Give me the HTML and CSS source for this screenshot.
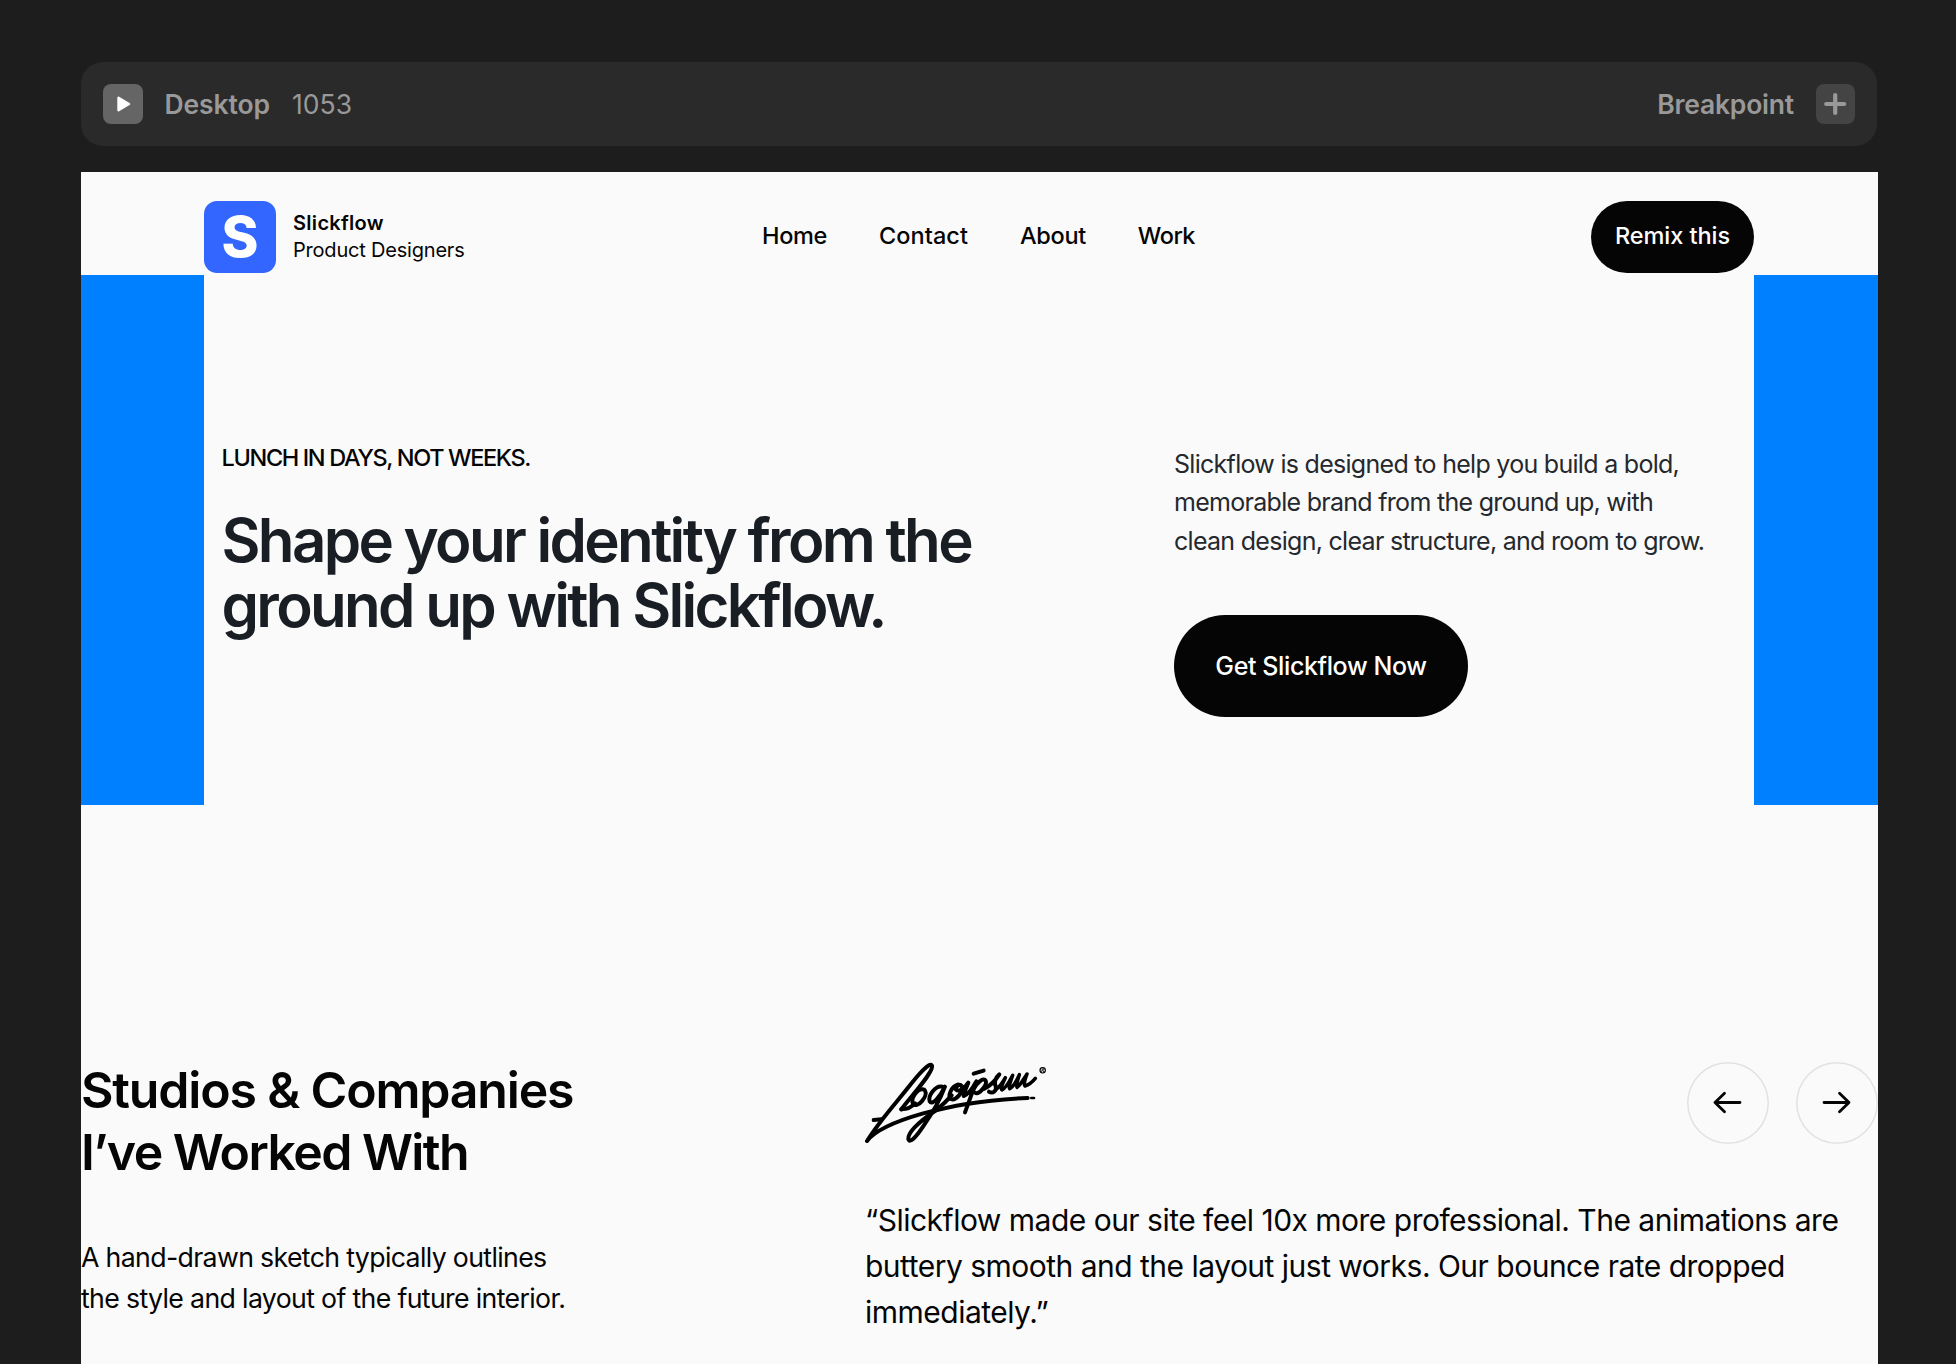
FILE: index.html
```html
<!DOCTYPE html>
<html lang="en">
<head>
<meta charset="utf-8">
<title>Slickflow</title>
<link rel="stylesheet" href="styles.css">
</head>
<body>
<div class="toolbar">
  <div class="toolbar-group">
    <span class="tool tool-play"><svg width="40" height="40" viewBox="0 0 40 40"><path d="M15.5 13.8v12.4L26 20z" fill="#fff" stroke="#fff" stroke-width="2.4" stroke-linejoin="round"/></svg></span>
    <span class="device">Desktop</span>
    <span class="device-width">1053</span>
  </div>
  <div class="toolbar-group">
    <span class="breakpoint">Breakpoint</span>
    <span class="tool tool-add"><svg width="39" height="40" viewBox="0 0 39 40"><path d="M19.2 11v18M10.2 20h18" fill="none" stroke="#999" stroke-width="4.2" stroke-linecap="round"/></svg></span>
  </div>
</div>
<div class="page">
  <header class="header">
    <div class="brand">
      <span class="brand-mark">S</span>
      <div class="brand-text"><span class="brand-name">Slickflow</span><span class="brand-role">Product Designers</span></div>
    </div>
    <nav class="nav">
      <a class="nav-home">Home</a><a class="nav-contact">Contact</a><a class="nav-about">About</a><a class="nav-work">Work</a>
    </nav>
    <a class="remix">Remix this</a>
  </header>
  <section class="hero">
    <div class="hero-inner">
      <div class="hero-copy">
        <p class="eyebrow">LUNCH IN DAYS, NOT WEEKS.</p>
        <h1 class="hero-title">Shape your identity from the<br>ground up with Slickflow.</h1>
      </div>
      <div class="hero-side">
        <p class="hero-text">Slickflow is designed to help you build a bold,<br>memorable brand from the ground up, with<br>clean design, clear structure, and room to grow.</p>
        <a class="cta">Get Slickflow Now</a>
      </div>
    </div>
  </section>
  <section class="clients">
    <div class="clients-intro">
      <h2 class="clients-title">Studios &amp; Companies<br><span class="title-second">I’ve Worked With</span></h2>
      <p class="clients-text">A hand-drawn sketch typically outlines<br>the style and layout of the future interior.</p>
    </div>
    <div class="testimonial">
      <div class="testimonial-top">
        <svg class="signature" width="182" height="82" viewBox="78 66 546 246" fill="none" stroke="#000" stroke-width="12" stroke-linecap="round" stroke-linejoin="round">
          <path d="M104 240L128 238"/>
          <path d="M187 208C222 162 284 96 279 77C274 62 236 106 208 142C172 188 122 242 84 303C112 266 180 241 250 221C330 200 420 180 566 174"/>
          <path d="M187 208C204 208 218 202 228 190"/>
          <path d="M252 148C234 146 214 176 222 192C236 206 268 168 258 152C256 148 254 148 252 148"/>
          <path d="M310 140C290 134 266 168 272 184C280 198 304 168 318 140C306 172 280 220 252 260C232 290 212 312 208 297C206 274 248 240 292 210C314 192 326 180 338 166"/>
          <path d="M356 134C336 140 326 168 335 177C350 184 376 154 368 138C362 130 350 138 350 148C360 158 376 146 388 128C382 144 374 158 374 168C386 164 400 146 412 124L378 217"/>
          <path d="M404 101L434 92"/>
          <path d="M402 150C414 126 434 112 440 122C446 134 420 166 408 158"/>
          <path d="M436 146C452 138 470 120 481 103C470 112 464 128 470 138C474 152 462 162 450 155"/>
          <path d="M474 146C484 138 492 126 499 113C490 132 484 146 489 150C502 144 512 122 521 106C514 126 508 142 512 146C524 140 534 120 541 104C536 120 532 138 534 142C546 134 554 116 564 102C558 116 554 134 558 138C570 134 580 126 589 115" stroke-width="10.5"/>
          <path d="M577 174h8" stroke-width="8"/>
          <circle cx="611" cy="91" r="8" stroke-width="3.5"/>
          <path d="M608 95l2-8c6-2 6 3 1 4l3 4" stroke-width="2.5"/>
        </svg>
        <div class="arrows">
          <span class="arrow"><svg width="82" height="82" viewBox="0 0 82 82"><path d="M53 40.5H28M37.5 31.2L28 40.5L37.5 49.8"/></svg></span>
          <span class="arrow"><svg width="82" height="82" viewBox="0 0 82 82"><path d="M28 40.5H53M43.5 31.2L53 40.5L43.5 49.8"/></svg></span>
        </div>
      </div>
      <p class="quote">“Slickflow made our site feel 10x more professional. The animations are<br>buttery smooth and the layout just works. Our bounce rate dropped<br>immediately.”</p>
    </div>
  </section>
</div>
</body>
</html>
```
FILE: styles.css
```css
* { box-sizing: border-box; }
html, body { height: 100%; overflow: hidden; }
body {
  margin: 0;
  padding: 62px 78px 0 81px;
  background: #1d1d1d;
  color: #050505;
  font-family: Inter, "Liberation Sans", sans-serif;
}
p, h1, h2 { margin: 0; white-space: nowrap; }

.toolbar {
  display: flex;
  align-items: center;
  justify-content: space-between;
  height: 84px;
  margin-right: 1px;
  padding: 0 22px;
  border-radius: 22px;
  background: #2a2a2a;
  color: #999;
  font-size: 26.5px;
  letter-spacing: 0.3px;
}
.toolbar-group { display: flex; align-items: center; }
.device, .device-width, .breakpoint { padding-bottom: 1px; }
.tool { display: flex; height: 40px; border-radius: 8px; }
.tool-play { width: 40px; background: #656565; }
.tool-add { width: 39px; margin-left: 22px; background: #444; }
.device { margin-left: 21.5px; font-weight: 600; letter-spacing: -0.1px; }
.device-width { margin-left: 22px; letter-spacing: 0; }
.breakpoint { font-weight: 600; letter-spacing: -0.2px; }

.page { height: 1192px; margin-top: 26px; background: #fafafa; }

.header {
  display: grid;
  grid-template-columns: 1fr auto 1fr;
  align-items: center;
  height: 103px;
  padding: 29px 124px 2px 123px;
}
.brand { display: flex; align-items: center; gap: 17px; }
.brand-mark {
  width: 72px;
  height: 72px;
  border-radius: 13px;
  background: #36f;
  color: #fff;
  font-size: 56px;
  font-weight: 800;
  line-height: 72px;
  text-align: center;
}
.brand-text { display: flex; flex-direction: column; font-size: 20px; line-height: 27.3px; }
.brand-name { font-weight: 600; letter-spacing: 0.3px; }
.brand-role { letter-spacing: -0.2px; }
.nav { display: flex; gap: 52px; font-size: 23.5px; font-weight: 500; padding-bottom: 3px; }
.nav-home, .nav-about { letter-spacing: -0.35px; }
.nav-contact { letter-spacing: 0.07px; }
.nav-work { margin-right: 1px; letter-spacing: -0.5px; }
.remix {
  justify-self: end;
  width: 163px;
  height: 72px;
  border-radius: 36px;
  background: #050505;
  color: #fff;
  font-size: 23.5px;
  font-weight: 500;
  line-height: 70px;
  letter-spacing: -0.05px;
  text-align: center;
}

.hero { height: 530px; padding: 0 124px 0 123px; background: #0080ff; }
.hero-inner {
  display: grid;
  grid-template-columns: 952.5px 1fr;
  height: 100%;
  padding-left: 17.5px;
  background: #fafafa;
}
.hero-copy { padding-top: 167px; }
.eyebrow { font-size: 23.5px; font-weight: 500; line-height: 32px; letter-spacing: -1.355px; }
.hero-title {
  margin-top: 33.6px;
  color: #191d24;
  font-size: 60px;
  font-weight: 600;
  line-height: 65.7px;
  letter-spacing: -2.69px;
}
.hero-side { padding-top: 170px; }
.hero-text { color: #25282d; font-size: 25px; line-height: 38.4px; letter-spacing: -0.71px; }
.cta {
  display: block;
  width: 294px;
  height: 102px;
  margin-top: 54.8px;
  border-radius: 51px;
  background: #050505;
  color: #fff;
  font-size: 25px;
  font-weight: 500;
  line-height: 102px;
  letter-spacing: -0.385px;
  text-align: center;
}

.clients { display: grid; grid-template-columns: 784px 1fr; padding-top: 256.5px; }
.clients-title {
  margin-top: -1.2px;
  font-size: 50px;
  font-weight: 600;
  line-height: 61.4px;
  letter-spacing: -1.18px;
}
.title-second { letter-spacing: -1.58px; }
.clients-text { margin-top: 54px; font-size: 26.7px; line-height: 41px; letter-spacing: -0.65px; }
.testimonial-top { display: flex; justify-content: space-between; height: 82px; }
.signature { overflow: visible; }
.arrows { display: flex; gap: 27.5px; }
.arrow {
  width: 82px;
  height: 82px;
  border-radius: 50%;
  box-shadow: inset 0 0 0 1.5px #e2e2e2;
}
.arrow svg { display: block; fill: none; stroke: #050505; stroke-width: 2.8; stroke-linecap: round; stroke-linejoin: round; }
.quote { margin-top: 53px; font-size: 30px; line-height: 46.2px; letter-spacing: -0.51px; }
```
